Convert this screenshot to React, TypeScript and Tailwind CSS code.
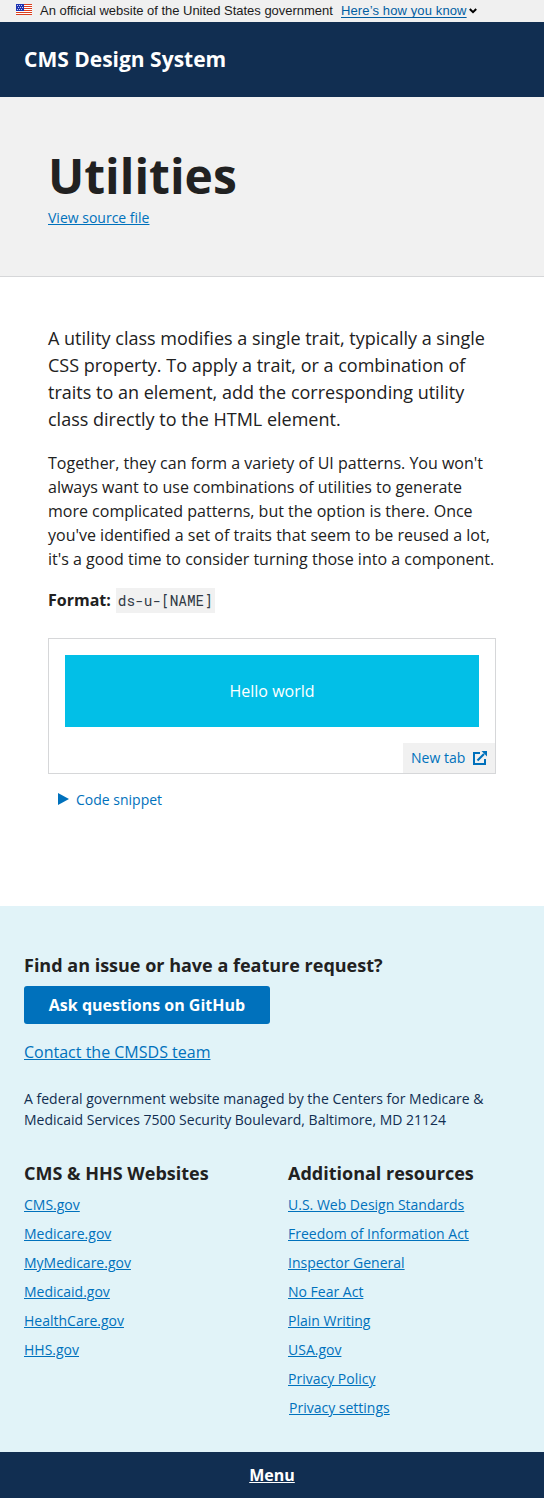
import React from "react";

const left = ["CMS.gov", "Medicare.gov", "MyMedicare.gov", "Medicaid.gov", "HealthCare.gov", "HHS.gov"];
const right = ["U.S. Web Design Standards", "Freedom of Information Act", "Inspector General", "No Fear Act", "Plain Writing", "USA.gov", "Privacy Policy"];

function Flag() {
  return (
    <svg width="16" height="11" viewBox="0 0 16 11" className="mb-[3px] shrink-0">
      <rect width="16" height="11" fill="#fff" />
      {[0, 2, 4, 6, 8, 10].map((y) => (
        <rect key={y} y={y} width="16" height="1" fill="#db3e1f" />
      ))}
      <rect width="8" height="7" fill="#1e33b1" />
      {[1, 3, 5].map((y) => [1, 3, 5].map((x) => <rect key={`${x}-${y}`} x={y === 3 ? x + 1 : x} y={y} width="1" height="1" fill="#c5caf0" />))}
    </svg>
  );
}

function Links({ title, items }: { title: string; items: string[] }) {
  return (
    <div className="w-[264px] shrink-0">
      <h2 className="text-[18px] leading-[23px] font-bold">{title}</h2>
      <ul className="mt-[9px] text-[14px] leading-[21px] text-[#0071bc]">
        {items.map((t) => (
          <li key={t} className="mb-2"><a className="underline">{t}</a></li>
        ))}
        {title === "Additional resources" && <li className="pl-px"><a className="underline">Privacy settings</a></li>}
      </ul>
    </div>
  );
}

export default function App() {
  return (
    <div className="flex h-[1498px] w-[544px] flex-col overflow-hidden bg-white font-['Open_Sans',sans-serif] text-[#212121]">
      <div className="flex h-[22px] items-center bg-[#f0f0f0] pl-4 font-['Liberation_Sans',sans-serif] text-[13px] text-[#1b1b1b]">
        <Flag />
        <span className="ml-2 w-[293px] whitespace-nowrap tracking-[-0.02px]">An official website of the United States government</span>
        <a className="ml-2 w-[126px] whitespace-nowrap tracking-[0.12px] text-[#005ea2] underline underline-offset-2">Here’s how you know</a>
        <svg width="8" height="6" viewBox="0 0 8 6" className="ml-[2px]"><path d="M0.8 1l3.2 3.2L7.2 1" fill="none" stroke="#000" strokeWidth="2" /></svg>
      </div>
      <header className="flex h-[75px] items-center bg-[#112e51] px-6 text-[21px] font-bold text-white">CMS Design System</header>
      <div className="h-[180px] border-b border-[#d6d7d9] bg-[#f1f1f1] px-12 pt-[48px]">
        <h1 className="text-[48px] leading-[62px] font-bold">Utilities</h1>
        <a className="block text-[14px] leading-[21px] text-[#0071bc] underline">View source file</a>
      </div>
      <main className="h-[629px] px-12 pt-12">
        <p className="text-[18px] leading-[27px]">A utility class modifies a single trait, typically a single<br />CSS property. To apply a trait, or a combination of<br />traits to an element, add the corresponding utility<br />class directly to the HTML element.</p>
        <p className="mt-[18px] text-[16px] leading-6 whitespace-nowrap">Together, they can form a variety of UI patterns. You won't<br />always want to use combinations of utilities to generate<br />more complicated patterns, but the option is there. Once<br />you've identified a set of traits that seem to be reused a lot,<br />it's a good time to consider turning those into a component.</p>
        <p className="mt-[17px] flex h-6 items-center text-[16px]"><strong>Format:</strong><code className="mt-px ml-[5px] h-[25px] bg-[#f1f1f1] px-[2px] font-['Roboto_Mono','Liberation_Mono',monospace] text-[14.4px] leading-[26px] text-[#323a45]">ds-u-[NAME]</code></p>
        <div className="mt-[26px] flex h-[136px] flex-col border border-[#d6d7d9] pt-4">
          <div className="mx-4 flex h-[72px] items-center justify-center bg-[#02bfe7] text-[16px] text-white">Hello world</div>
          <a className="mt-4 flex h-[30px] w-[92px] items-center self-end bg-[#f1f1f1] pb-px pl-2 text-[14px] text-[#0071bc]">New tab
            <svg width="14" height="14" viewBox="0 0 14 14" className="mt-px ml-2" fill="none" stroke="#0071bc" strokeWidth="2"><path d="M7 2H1v11h11V8" /><path d="M4.5 9.5L11 3" strokeWidth="2.2" /><path d="M8.5 0H14v5.5z" fill="#0071bc" stroke="none" /></svg>
          </a>
        </div>
        <div className="mt-[14px] flex h-[22px] items-center pl-[10px] text-[14px] text-[#0071bc]">
          <svg width="11" height="12" viewBox="0 0 11 12" className="mr-[7px]"><path d="M0 0L11 6 0 12z" fill="#0071bc" /></svg>Code snippet
        </div>
      </main>
      <footer className="h-[546px] bg-[#e1f3f8] px-6 pt-12">
        <h2 className="text-[18px] leading-[23px] font-bold">Find an issue or have a feature request?</h2>
        <a className="mt-[9px] flex h-[38px] w-[246px] items-center justify-center rounded-[3px] bg-[#0071bc] text-[16px] font-bold text-white">Ask questions on GitHub</a>
        <a className="mt-4 block text-[16px] leading-6 text-[#0071bc] underline">Contact the CMSDS team</a>
        <p className="mt-6 text-[14px] leading-[21px] text-[#112e51]">A federal government website managed by the Centers for Medicare &amp;<br />Medicaid Services 7500 Security Boulevard, Baltimore, MD 21124</p>
        <div className="mt-8 flex"><Links title="CMS & HHS Websites" items={left} /><Links title="Additional resources" items={right} /></div>
      </footer>
      <a className="flex h-[46px] items-center justify-center bg-[#112e51] text-[16px] font-bold text-white underline">Menu</a>
    </div>
  );
}
